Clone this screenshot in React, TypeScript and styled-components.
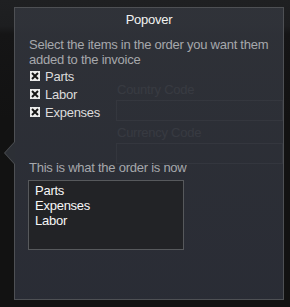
import React from 'react'
import styled, { createGlobalStyle } from 'styled-components'

const GlobalStyle = createGlobalStyle`
  html, body {
    margin: 0;
    padding: 0;
  }
  body {
    width: 290px;
    height: 307px;
    overflow: hidden;
    background: linear-gradient(to bottom, #1f2022 0px, #1d1e20 26px, #151516 34px, #121212 120px);
    font-family: "Liberation Sans", Arial, sans-serif;
    font-size: 13px;
    letter-spacing: -0.25px;
  }
`

const Page = styled.div`
  position: relative;
  width: 290px;
  height: 307px;
`

// the settings form that sits behind the popover
const Form = styled.div`
  display: flex;
  flex-direction: column;
  padding: 82px 7px 0 116px;
`

const FieldLabel = styled.label`
  color: #6c6c6c;
  line-height: 16px;
  padding-left: 1px;
`

const FieldInput = styled.div`
  height: 19px;
  border: 1px solid #525252;
  margin: 2px 0 4px;
`

const Popover = styled.div`
  position: absolute;
  left: 14px;
  top: 7px;
  width: 270px;
  height: 293px;
  box-sizing: border-box;
  border: 1px solid #4e5054;
  background: linear-gradient(to bottom, rgba(50, 53, 60, 0.88), rgba(45, 48, 58, 0.88));

  &::before,
  &::after {
    content: '';
    position: absolute;
    top: 134px;
    border-top: 11px solid transparent;
    border-bottom: 11px solid transparent;
  }
  &::before {
    left: -11px;
    border-right: 10px solid #4e5054;
  }
  &::after {
    left: -10px;
    border-right: 10px solid #2c2f35;
  }
`

const Title = styled.div`
  padding-top: 4px;
  line-height: 16px;
  text-align: center;
  color: #f2f2f2;
`

const Body = styled.div`
  display: flex;
  flex-direction: column;
  padding: 0 4px 0 14px;
`

const Hint = styled.p<{ $gap: number }>`
  margin: ${p => p.$gap}px 0 0;
  line-height: 15px;
  color: #a6a8ac;
`

const Checks = styled.div`
  display: flex;
  flex-direction: column;
`

const CheckRow = styled.label`
  display: flex;
  align-items: center;
  gap: 5px;
  height: 18px;
  padding-left: 1px;
  color: #dcdcdc;

  svg {
    margin-bottom: 1px;
  }
`

const OrderList = styled.div`
  margin: 5px 0 0 -1px;
  width: 156px;
  height: 70px;
  box-sizing: border-box;
  border: 1px solid #57595c;
  background: #222326;
  padding: 2px 6px;
`

const OrderItem = styled.div`
  line-height: 15px;
  color: #f6f6f6;
`

const CheckBox = () => (
  <svg width="10" height="10" viewBox="0 0 10 10">
    <rect x="0" y="0" width="10" height="10" fill="#ececec" />
    <path d="M2 2 L8 8 M8 2 L2 8" stroke="#151515" strokeWidth="2" />
  </svg>
)

const items = ['Parts', 'Labor', 'Expenses']
const order = ['Parts', 'Expenses', 'Labor']

export default function App() {
  return (
    <Page>
      <GlobalStyle />
      <Form>
        <FieldLabel>Country Code</FieldLabel>
        <FieldInput />
        <FieldLabel>Currency Code</FieldLabel>
        <FieldInput />
      </Form>
      <Popover>
        <Title>Popover</Title>
        <Body>
          <Hint $gap={9}>Select the items in the order you want them added to the invoice</Hint>
          <Checks>
            {items.map(name => (
              <CheckRow key={name}>
                <CheckBox />
                {name}
              </CheckRow>
            ))}
          </Checks>
          <Hint $gap={39}>This is what the order is now</Hint>
          <OrderList>
            {order.map(name => (
              <OrderItem key={name}>{name}</OrderItem>
            ))}
          </OrderList>
        </Body>
      </Popover>
    </Page>
  )
}
